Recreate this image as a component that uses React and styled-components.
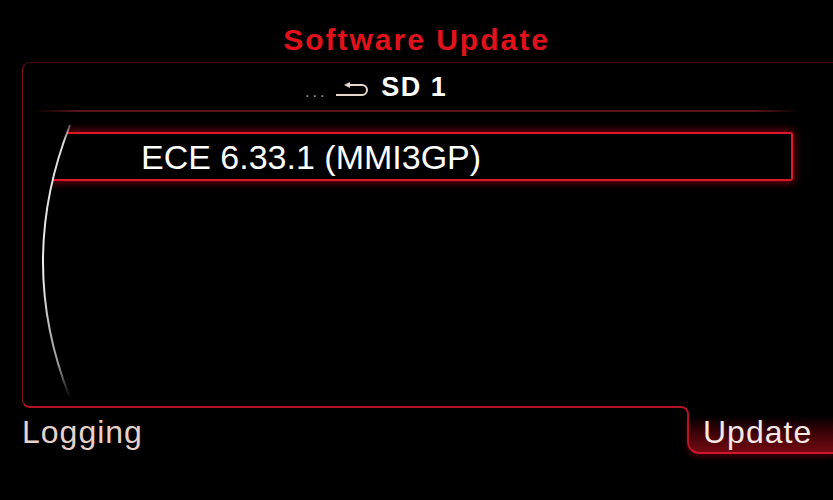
import React from 'react'
import styled, { createGlobalStyle } from 'styled-components'

const GlobalStyle = createGlobalStyle`
  html, body {
    margin: 0;
    padding: 0;
    background: #000;
  }
  body {
    font-family: 'Liberation Sans', Arial, sans-serif;
  }
`

const LINE_RED = '#b51224'

export default function App() {
  return (
    <Screen>
      <GlobalStyle />
      <Title>Software Update</Title>

      <Panel>
        <Header>
          <Dots>...</Dots>
          <BackIcon viewBox="0 0 32 15" width="32" height="15">
            <path d="M0 13 H26 A5 5 0 0 0 26 3 H13" fill="none" stroke="#e6d6d0" strokeWidth="2" />
            <polygon points="14,0 8,3 14,6" fill="#e6d6d0" />
          </BackIcon>
          <Crumb>SD 1</Crumb>
        </Header>
        <Separator />

        <List>
          <Row selected>ECE 6.33.1 (MMI3GP)</Row>
        </List>

        <ScrollArc viewBox="0 0 60 345" width="60" height="345">
          <defs>
            <linearGradient id="arcFade" x1="0" y1="0" x2="0" y2="1">
              <stop offset="0" stopColor="#ececf0" stopOpacity="0.35" />
              <stop offset="0.06" stopColor="#ececf0" stopOpacity="0.95" />
              <stop offset="0.55" stopColor="#ececf0" stopOpacity="1" />
              <stop offset="0.88" stopColor="#ececf0" stopOpacity="0.65" />
              <stop offset="1" stopColor="#ececf0" stopOpacity="0" />
            </linearGradient>
          </defs>
          <path d="M0 55 L47 55 L47 62 Q-7 199 47 335 L0 335 Z" fill="#000" />
          <path d="M47 62 Q-7 199 47 335" fill="none" stroke="url(#arcFade)" strokeWidth="2" />
        </ScrollArc>
      </Panel>

      <Footer>
        <SoftKey>Logging</SoftKey>
        <UpdateTab>
          <SoftKey bright>Update</SoftKey>
        </UpdateTab>
      </Footer>
    </Screen>
  )
}

const Screen = styled.div`
  width: 833px;
  height: 500px;
  background: #000;
  display: flex;
  flex-direction: column;
  overflow: hidden;
`

const Title = styled.div`
  height: 62px;
  box-sizing: border-box;
  padding-top: 26px;
  text-align: center;
  color: #e2121c;
  font-weight: 700;
  font-size: 30px;
  line-height: 28px;
  letter-spacing: 2px;
`

const Panel = styled.div`
  position: relative;
  margin-left: 22px;
  width: 811px;
  height: 346px;
  box-sizing: border-box;
  border-top: 1px solid #3e0b10;
  border-left: 1px solid #7c1019;
  border-bottom: 2px solid ${LINE_RED};
  border-radius: 8px 0 0 8px;
  display: flex;
  flex-direction: column;
`

const Header = styled.div`
  height: 47px;
  box-sizing: border-box;
  display: flex;
  align-items: flex-end;
  padding: 0 0 9px 282px;
`

const Dots = styled.span`
  color: #9c9c9c;
  font-size: 16px;
  line-height: 16px;
  letter-spacing: 3px;
  margin-bottom: 1px;
`

const BackIcon = styled.svg`
  margin: 0 13px 4px 9px;
  flex-shrink: 0;
`

const Crumb = styled.span`
  color: #fff;
  font-weight: 700;
  font-size: 27px;
  line-height: 27px;
  letter-spacing: 1.5px;
`

const Separator = styled.div`
  height: 2px;
  margin: 0 32px 0 10px;
  background: linear-gradient(to right, rgba(90, 20, 24, 0), #5a1418 6%, #5a1418 94%, rgba(90, 20, 24, 0));
`

const List = styled.div`
  flex: 1;
  padding: 20px 40px 0 28px;
`

const Row = styled.div`
  height: 49px;
  box-sizing: border-box;
  display: flex;
  align-items: center;
  padding-left: 90px;
  color: #fff;
  font-size: 34px;
  line-height: 34px;
  background: #000;
  border: 2px solid ${p => (p.selected ? '#e0162a' : 'transparent')};
  border-left: none;
  border-radius: 0 3px 3px 0;
  box-shadow: ${p => (p.selected ? '0 0 9px 2px rgba(200, 0, 24, 0.55)' : 'none')};
`

const ScrollArc = styled.svg`
  position: absolute;
  left: 0;
  top: 0;
`

const Footer = styled.div`
  flex: 1;
  display: flex;
  justify-content: space-between;
  align-items: flex-start;
`

const SoftKey = styled.span`
  display: block;
  color: ${p => (p.bright ? '#f6e8e4' : '#e6d2ca')};
  font-size: 32px;
  line-height: 32px;
  letter-spacing: 1px;
  padding-left: ${p => (p.bright ? '0' : '22px')};
  margin-top: ${p => (p.bright ? '0' : '8px')};
`

const UpdateTab = styled.div`
  position: relative;
  margin-top: 8px;
  width: 146px;
  height: 38px;
  box-sizing: border-box;
  padding-left: 14px;
  border-left: 2px solid ${LINE_RED};
  border-bottom: 2px solid #d0162a;
  border-bottom-left-radius: 12px;
  background: linear-gradient(to top, #720912 0%, #3a0307 55%, #000 100%);
  box-shadow: 0 3px 6px rgba(180, 0, 20, 0.35);

  &::before {
    content: '';
    position: absolute;
    z-index: 2;
    top: -10px;
    left: -12px;
    width: 12px;
    height: 10px;
    box-sizing: border-box;
    border-top: 2px solid ${LINE_RED};
    border-right: 2px solid ${LINE_RED};
    border-top-right-radius: 8px;
  }

  &::after {
    content: '';
    position: absolute;
    z-index: 1;
    top: -10px;
    left: -8px;
    right: 0;
    height: 10px;
    background: #000;
  }
`
